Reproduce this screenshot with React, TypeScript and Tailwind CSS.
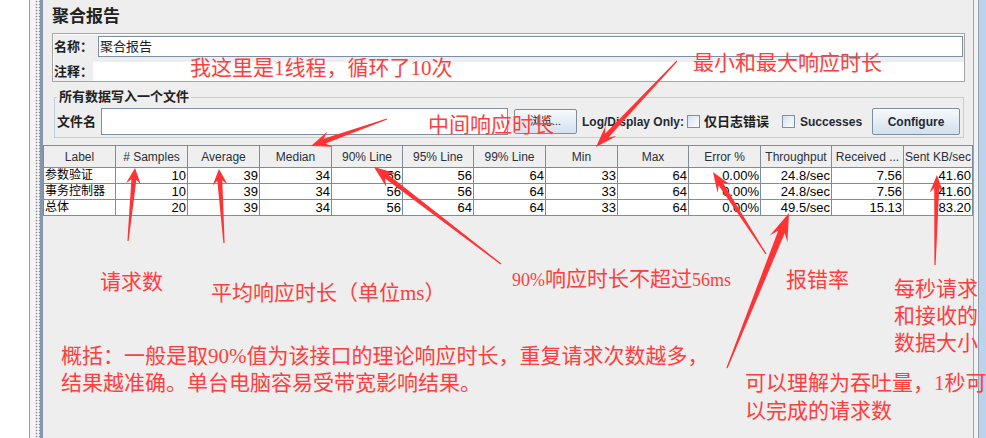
import React from "react";

const COLS = [
  "Label",
  "# Samples",
  "Average",
  "Median",
  "90% Line",
  "95% Line",
  "99% Line",
  "Min",
  "Max",
  "Error %",
  "Throughput",
  "Received ...",
  "Sent KB/sec",
];

const ROWS = [
  ["参数验证", "10", "39", "34", "56", "56", "64", "33", "64", "0.00%", "24.8/sec", "7.56", "41.60"],
  ["事务控制器", "10", "39", "34", "56", "56", "64", "33", "64", "0.00%", "24.8/sec", "7.56", "41.60"],
  ["总体", "20", "39", "34", "56", "64", "64", "33", "64", "0.00%", "49.5/sec", "15.13", "83.20"],
];

type Arrow = { from: [number, number]; to: [number, number]; head: number; len: number; shaft: number };

const ARROWS: Arrow[] = [
  { from: [387, 119], to: [311, 146], head: 16, len: 20, shaft: 5 },
  { from: [677, 61], to: [596, 147], head: 15, len: 22, shaft: 5 },
  { from: [128, 241], to: [135, 168], head: 15, len: 16, shaft: 5 },
  { from: [224, 243], to: [219, 169], head: 15, len: 16, shaft: 5 },
  { from: [501, 264], to: [374, 167], head: 17, len: 22, shaft: 5 },
  { from: [766, 254], to: [713, 172], head: 15, len: 20, shaft: 5 },
  { from: [727, 368], to: [789, 213], head: 19, len: 28, shaft: 7 },
  { from: [935, 265], to: [937, 175], head: 14, len: 18, shaft: 5 },
];

// tapered arrow: thin tail, widening shaft, swept-back barbs
function arrowPoints(a: Arrow) {
  const [x1, y1] = a.from;
  const [x2, y2] = a.to;
  const dx = x2 - x1;
  const dy = y2 - y1;
  const L = Math.hypot(dx, dy);
  const ux = dx / L;
  const uy = dy / L;
  const nx = -uy;
  const ny = ux;
  const bx = x2 - ux * a.len;
  const by = y2 - uy * a.len;
  const sx = x2 - ux * a.len * 0.72;
  const sy = y2 - uy * a.len * 0.72;
  const tw = 0.6;
  const sw = a.shaft / 2;
  const hw = a.head / 2;
  const pts = [
    [x1 + nx * tw, y1 + ny * tw],
    [sx + nx * sw, sy + ny * sw],
    [bx + nx * hw, by + ny * hw],
    [x2, y2],
    [bx - nx * hw, by - ny * hw],
    [sx - nx * sw, sy - ny * sw],
    [x1 - nx * tw, y1 - ny * tw],
  ];
  return pts.map((p) => `${p[0].toFixed(1)},${p[1].toFixed(1)}`).join(" ");
}

function Checkbox() {
  return (
    <span className="block h-[13px] w-[13px] shrink-0 border border-[#7f8fa3] bg-gradient-to-br from-[#d5e0ec] to-[#ffffff]" />
  );
}

export default function App() {
  return (
    <div className="relative flex h-[438px] w-[986px] overflow-hidden bg-white font-['Liberation_Sans','Noto_Sans_CJK_SC',sans-serif] text-[#1d1d1d]">
      {/* left splitter */}
      <div className="w-[29px] bg-white" />
      <div className="w-px bg-[#9c9c9c]" />
      <div className="w-[5px] bg-[#f4f4f4]" />
      <div className="w-[5px] bg-[#f4f4f4] bg-[radial-gradient(circle,#8c8c8c_0.7px,transparent_1.1px)] bg-[length:3px_3px]" />
      <div className="w-[3px] bg-[#8497ac]" />

      {/* report panel */}
      <main className="flex w-[930px] flex-col bg-[#eeeeee]">
        <div className="pl-[9px] pt-[6px]">
          <h1 className="text-[17px] font-bold leading-[22px] text-[#222]">聚合报告</h1>

          <div className="mt-[5px] w-[913px] border border-[#a5a5a5] pt-[2px] shadow-[inset_1px_1px_0_#ffffff]">
            <div className="flex h-[21px] items-center">
              <span className="w-[45px] pl-[1px] text-[13px] font-bold">名称：</span>
              <div className="flex h-[21px] w-[865px] items-center border border-[#7f8fa3] bg-white pl-[1px] text-[13px]">
                聚合报告
              </div>
            </div>
            <div className="mt-[5px] flex h-[19px] items-center">
              <span className="w-[40px] pl-[1px] text-[13px] font-bold">注释：</span>
              <div className="h-[19px] w-[871px] bg-white" />
            </div>
          </div>

          <fieldset className="ml-[2px] mt-[8px] w-[910px] border border-[#b8cfe5] px-[2px] pb-[2px]">
            <legend className="px-[2px] text-[13px] font-bold leading-[14px] text-[#222]">所有数据写入一个文件</legend>
            <div className="mt-[4px] flex h-[27px] items-center">
              <span className="w-[44px] text-[13px] font-bold">文件名</span>
              <div className="h-[27px] w-[407px] border border-[#7f8fa3] bg-white" />
              <button className="ml-[6px] h-[25px] w-[63px] rounded-[2px] border border-[#7d8ea2] bg-gradient-to-b from-[#f7fafd] to-[#d5e1ee] text-[11px] text-[#222]">
                浏览...
              </button>
              <span className="ml-[5px] w-[95px] whitespace-nowrap text-[12px] font-bold text-[#1f2a36]">Log/Display Only:</span>
              <span className="ml-[10px]">
                <Checkbox />
              </span>
              <span className="ml-[4px] w-[64px] whitespace-nowrap text-[13px] font-bold">仅日志错误</span>
              <span className="ml-[14px]">
                <Checkbox />
              </span>
              <span className="ml-[5px] w-[62px] text-[12px] font-bold text-[#1f2a36]">Successes</span>
              <button className="ml-[10px] h-[27px] w-[88px] rounded-[2px] border border-[#7d8ea2] bg-gradient-to-b from-[#f7fafd] to-[#d3dfec] text-[12px] font-bold text-[#1f2a36]">
                Configure
              </button>
            </div>
          </fieldset>
        </div>

        {/* results table */}
        <div className="mt-[7px] grid grid-cols-[72px_72px_72px_72px_71px_71px_72px_72px_71px_72px_71px_72px_69px] border-l border-t border-[#7e8c9c]">
          {COLS.map((c) => (
            <div
              key={c}
              className="flex h-[22px] items-center justify-center overflow-hidden whitespace-nowrap border-b border-r border-[#7e8c9c] bg-[#efefef] text-[12px] text-[#2a2f3a]"
            >
              {c}
            </div>
          ))}
          {ROWS.map((row) =>
            row.map((v, i) => (
              <div
                key={row[0] + i}
                className={
                  i === 0
                    ? "h-[16px] overflow-hidden whitespace-nowrap border-b border-r border-[#7e8c9c] bg-white pl-[1px] text-[12px] leading-[15px] text-black"
                    : "h-[16px] overflow-hidden whitespace-nowrap border-b border-r border-[#7e8c9c] bg-white pr-[1px] text-right text-[13px] leading-[15px] text-black"
                }
              >
                {v}
              </div>
            )),
          )}
        </div>
      </main>

      {/* right scrollbar edge */}
      <div className="w-px bg-[#a3a3a3]" />
      <div className="w-[4px] bg-[#f2f2f2]" />
      <div className="w-px bg-[#8fa0b3]" />
      <div className="w-[7px] bg-[#bcd3ea]" />

      {/* red annotations */}
      <div className="pointer-events-none absolute inset-0 font-['Liberation_Serif','Noto_Sans_CJK_SC',serif] text-[21px] leading-[21px] text-[#ff3d3d]">
        <span className="absolute left-[190px] top-[58px] whitespace-nowrap">我这里是1线程，循环了10次</span>
        <span className="absolute left-[693px] top-[53px] whitespace-nowrap">最小和最大响应时长</span>
        <span className="absolute left-[428px] top-[115px] whitespace-nowrap">中间响应时长</span>
        <span className="absolute left-[100px] top-[272px] whitespace-nowrap">请求数</span>
        <span className="absolute left-[211px] top-[283px] whitespace-nowrap">平均响应时长（单位ms）</span>
        <span className="absolute left-[512px] top-[269px] whitespace-nowrap">
          <span className="text-[18px]">90%</span>响应时长不超过<span className="text-[18px]">56ms</span>
        </span>
        <span className="absolute left-[786px] top-[270px] whitespace-nowrap">报错率</span>
        <span className="absolute left-[894px] top-[276px] whitespace-nowrap leading-[27px]">
          每秒请求
          <br />
          和接收的
          <br />
          数据大小
        </span>
        <span className="absolute left-[61px] top-[343px] whitespace-nowrap leading-[27px]">
          概括：一般是取90%值为该接口的理论响应时长，重复请求次数越多，
          <br />
          结果越准确。单台电脑容易受带宽影响结果。
        </span>
        <span className="absolute left-[745px] top-[369px] whitespace-nowrap leading-[28px]">
          可以理解为吞吐量，1秒可
          <br />
          以完成的请求数
        </span>
      </div>

      <svg className="pointer-events-none absolute inset-0" width="986" height="438" viewBox="0 0 986 438">
        {ARROWS.map((a, i) => (
          <polygon key={i} points={arrowPoints(a)} fill="#ff3333" />
        ))}
      </svg>
    </div>
  );
}
